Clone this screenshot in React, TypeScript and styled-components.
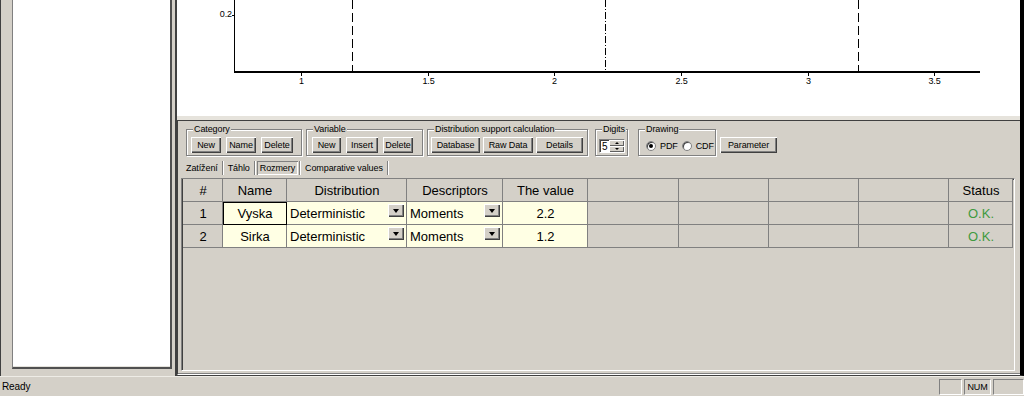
import React from "react";
import styled, { createGlobalStyle } from "styled-components";

const uiFont = `"Liberation Sans", Arial, sans-serif`;
const gridFont = `"Liberation Sans", Arial, sans-serif`;

const GlobalStyle = createGlobalStyle`
  html, body {
    margin: 0;
    padding: 0;
    background: #d4d0c8;
  }
  body {
    width: 1024px;
    height: 396px;
    overflow: hidden;
  }
`;

const Window = styled.div`
  width: 1024px;
  height: 396px;
  display: flex;
  flex-direction: column;
  background: #d4d0c8;
  font-family: ${uiFont};
  font-size: 9px;
  letter-spacing: -0.1px;
  color: #000;
`;

const Main = styled.div`
  display: flex;
  height: 376px;
`;

const LeftPane = styled.div`
  width: 175px;
  box-sizing: border-box;
  border-left: 1px solid #404040;
  padding: 0 3px 7px 11px;
  display: flex;
`;

const ListBox = styled.div`
  flex: 1;
  background: #fff;
  border-left: 1px solid #808080;
  border-right: 2px solid #505050;
  border-bottom: 2px solid #505050;
  box-shadow: inset 0 -1px #e4e2dc;
`;

const RightPane = styled.div`
  flex: 1;
  display: flex;
  flex-direction: column;
  border-left: 2px solid #404040;
  border-right: 4px solid #000;
  border-bottom: 1px solid #404040;
`;

const Chart = styled.div`
  height: 116px;
  background: #fff;
  flex: none;
`;

const Splitter = styled.div`
  height: 4px;
  background: #e6e3dc;
  flex: none;
`;

const ControlPanel = styled.div`
  flex: 1;
  display: flex;
  flex-direction: column;
  border-top: 1px solid #404040;
  border-left: 1px solid #404040;
  border-bottom: 1px solid #fff;
  box-shadow: inset 0 -1px #808080;
  padding-bottom: 3px;
  min-height: 0;
`;

const Toolbar = styled.div`
  display: flex;
  align-items: flex-start;
  padding: 8px 0 0 8px;
`;

const Group = styled.div<{ $w: number; $ml?: number; $pad?: number; $gap?: number; $top?: number }>`
  position: relative;
  box-sizing: border-box;
  width: ${(p) => p.$w}px;
  height: 27px;
  margin-left: ${(p) => p.$ml ?? 0}px;
  padding: ${(p) => p.$top ?? 7}px 0 0 ${(p) => p.$pad ?? 4}px;
  display: flex;
  align-items: flex-start;
  gap: ${(p) => p.$gap ?? 5}px;
  border: 1px solid #808080;
  box-shadow: inset 1px 1px #fff, 1px 1px #fff;
`;

const Legend = styled.span`
  position: absolute;
  top: -7px;
  left: 6px;
  padding: 0 1px;
  line-height: 12px;
  background: #d4d0c8;
`;

const Button = styled.button<{ $w: number; $mt?: number; $ml?: number }>`
  width: ${(p) => p.$w}px;
  height: 16px;
  margin: ${(p) => p.$mt ?? 0}px 0 0 ${(p) => p.$ml ?? 0}px;
  padding: 0;
  border: none;
  background: #d4d0c8;
  font: inherit;
  letter-spacing: inherit;
  color: #000;
  display: flex;
  align-items: center;
  justify-content: center;
  box-shadow: inset 1px 1px #fff, inset -1px -1px #404040, inset -2px -2px #808080;
`;

const Edit = styled.div`
  box-sizing: border-box;
  width: 26px;
  height: 14px;
  margin-top: 2px;
  display: flex;
  align-items: center;
  background: #fff;
  border: 1px solid;
  border-color: #808080 #fff #fff #808080;
  box-shadow: inset 1px 1px #404040;
  padding-left: 2px;
  font-size: 10px;
`;

const Spin = styled.div`
  margin-left: auto;
  width: 15px;
  height: 12px;
  display: flex;
  flex-direction: column;
`;

const SpinButton = styled.div<{ $up?: boolean }>`
  flex: 1;
  background: #d4d0c8;
  display: flex;
  align-items: center;
  justify-content: center;
  box-shadow: inset 1px 1px #fff, inset -1px -1px #606060;
  &::after {
    content: "";
    border-left: 2px solid transparent;
    border-right: 2px solid transparent;
    ${(p) => (p.$up ? "border-bottom: 2px solid #000;" : "border-top: 2px solid #000;")}
  }
`;

const RadioRow = styled.label`
  display: flex;
  align-items: center;
  gap: 4px;
  height: 14px;
  margin-top: 2px;
`;

const RadioDot = styled.span<{ $on?: boolean }>`
  box-sizing: border-box;
  width: 10px;
  height: 10px;
  border-radius: 50%;
  background: #fff;
  border: 1px solid #808080;
  box-shadow: inset 1px 1px #404040;
  display: flex;
  align-items: center;
  justify-content: center;
  &::after {
    content: "";
    width: 4px;
    height: 4px;
    border-radius: 50%;
    background: ${(p) => (p.$on ? "#000" : "transparent")};
  }
`;

const TabBar = styled.div`
  display: flex;
  align-items: stretch;
  height: 14px;
  margin: 5px 0 0 5px;
`;

const Tab = styled.span<{ $active?: boolean }>`
  display: flex;
  align-items: center;
  padding: 0 3px;
  box-shadow: ${(p) => (p.$active ? "inset 1px 1px #808080, inset -1px -1px #fff" : "none")};
`;

const TabSep = styled.span`
  width: 0;
  border-left: 1px solid #808080;
  border-right: 1px solid #fff;
  margin: 0 1px;
`;

const GridFrame = styled.div`
  flex: 1;
  margin: 3px 0 0 3px;
  width: 834px;
  box-sizing: border-box;
  border: 1px solid;
  border-color: #808080 #fff #fff #808080;
  box-shadow: inset 1px 1px #404040;
  padding: 0 0 0 1px;
  font-family: ${gridFont};
  font-size: 13px;
  letter-spacing: 0;
  overflow: hidden;
`;

const Table = styled.div<{ $cols: string }>`
  display: grid;
  grid-template-columns: ${(p) => p.$cols};
  grid-auto-rows: 23px;
`;

const Cell = styled.div<{ $bg?: string; $align?: string; $color?: string; $selected?: boolean }>`
  box-sizing: border-box;
  display: flex;
  align-items: center;
  justify-content: ${(p) => p.$align ?? "center"};
  padding: 0 2px 0 3px;
  white-space: nowrap;
  overflow: hidden;
  background: ${(p) => p.$bg ?? "#d4d0c8"};
  color: ${(p) => p.$color ?? "#000"};
  border-right: 1px solid ${(p) => (p.$selected ? "#000" : "#808080")};
  border-bottom: 1px solid ${(p) => (p.$selected ? "#000" : "#808080")};
  box-shadow: ${(p) => (p.$selected ? "inset 1px 1px #000" : "none")};
`;

const DropButton = styled.span`
  margin: 2px 0 0 auto;
  align-self: flex-start;
  width: 16px;
  height: 13px;
  flex: none;
  background: #d4d0c8;
  display: flex;
  align-items: center;
  justify-content: center;
  box-shadow: inset 1px 1px #fff, inset -1px -1px #404040, inset -2px -2px #808080;
  &::after {
    content: "";
    border-left: 3.5px solid transparent;
    border-right: 3.5px solid transparent;
    border-top: 4px solid #000;
  }
`;

const StatusBar = styled.div`
  height: 20px;
  box-sizing: border-box;
  display: flex;
  align-items: center;
  border-top: 1px solid #eeece6;
`;

const StatusText = styled.span`
  flex: 1;
  padding-left: 2px;
  font-size: 10px;
`;

const StatusPane = styled.span<{ $w: number }>`
  box-sizing: border-box;
  width: ${(p) => p.$w}px;
  height: 16px;
  margin-left: 2px;
  border: 1px solid;
  border-color: #808080 #fff #fff #808080;
  display: flex;
  align-items: center;
  justify-content: center;
`;

const columns = [
  { title: "#", w: 40 },
  { title: "Name", w: 64 },
  { title: "Distribution", w: 120 },
  { title: "Descriptors", w: 96 },
  { title: "The value", w: 85 },
  { title: "", w: 91 },
  { title: "", w: 90 },
  { title: "", w: 90 },
  { title: "", w: 90 },
  { title: "Status", w: 64 },
];

const rows = [
  { id: 1, name: "Vyska", dist: "Deterministic", desc: "Moments", value: "2.2", status: "O.K." },
  { id: 2, name: "Sirka", dist: "Deterministic", desc: "Moments", value: "1.2", status: "O.K." },
];

const YELLOW = "#ffffe4";

// value -> x in chart coordinates (chart starts at page x 177)
const xv = (v: number) => Math.round(124 + (v - 1) * 253.3) + 0.5;
const ticks = [1, 1.5, 2, 2.5, 3, 3.5];
const chartFont = "Liberation Sans, Arial, sans-serif";

const PlotArea = () => (
  <svg width="843" height="116" style={{ display: "block" }}>
    <line x1="57.5" y1="0" x2="57.5" y2="72" stroke="#000" />
    <rect x="57" y="71" width="746" height="2" fill="#000" />
    <line x1="55" y1="15.5" x2="57" y2="15.5" stroke="#000" />
    <text x="55" y="17" fontSize="9" fontFamily={chartFont} textAnchor="end">
      0.2
    </text>
    {ticks.map((t) => (
      <g key={t}>
        <line x1={xv(t)} y1="73" x2={xv(t)} y2="76" stroke="#000" />
        <text x={xv(t)} y="84" fontSize="9" fontFamily={chartFont} textAnchor="middle">
          {t}
        </text>
      </g>
    ))}
    <line x1={xv(1.2)} y1="0" x2={xv(1.2)} y2="71" stroke="#000" strokeDasharray="9 4" />
    <line x1={xv(2.2)} y1="0" x2={xv(2.2)} y2="71" stroke="#000" strokeDasharray="7 2 1 2" />
    <line x1={xv(3.2)} y1="0" x2={xv(3.2)} y2="71" stroke="#000" strokeDasharray="9 4" />
  </svg>
);

const App = () => {
  return (
    <Window>
      <GlobalStyle />
      <Main>
        <LeftPane>
          <ListBox />
        </LeftPane>
        <RightPane>
          <Chart>
            <PlotArea />
          </Chart>
          <Splitter />
          <ControlPanel>
            <Toolbar>
              <Group $w={116} $pad={4}>
                <Legend>Category</Legend>
                <Button $w={30}>New</Button>
                <Button $w={30}>Name</Button>
                <Button $w={32}>Delete</Button>
              </Group>
              <Group $w={117} $ml={4} $pad={5}>
                <Legend>Variable</Legend>
                <Button $w={29}>New</Button>
                <Button $w={32}>Insert</Button>
                <Button $w={30}>Delete</Button>
              </Group>
              <Group $w={161} $ml={4} $pad={3} $gap={3}>
                <Legend>Distribution support calculation</Legend>
                <Button $w={49}>Database</Button>
                <Button $w={50}>Raw Data</Button>
                <Button $w={47}>Details</Button>
              </Group>
              <Group $w={33} $ml={7} $pad={3}>
                <Legend>Digits</Legend>
                <Edit>
                  5
                  <Spin>
                    <SpinButton $up />
                    <SpinButton />
                  </Spin>
                </Edit>
              </Group>
              <Group $w={78} $ml={10} $pad={7} $gap={4}>
                <Legend>Drawing</Legend>
                <RadioRow>
                  <RadioDot $on />
                  PDF
                </RadioRow>
                <RadioRow>
                  <RadioDot />
                  CDF
                </RadioRow>
              </Group>
              <Button $w={57} $mt={8} $ml={4}>
                Parameter
              </Button>
            </Toolbar>
            <TabBar>
              <Tab>Zatížení</Tab>
              <TabSep />
              <Tab>Táhlo</Tab>
              <TabSep />
              <Tab $active>Rozmery</Tab>
              <TabSep />
              <Tab>Comparative values</Tab>
              <TabSep />
            </TabBar>
            <GridFrame>
              <Table $cols={columns.map((c) => `${c.w}px`).join(" ")}>
                {columns.map((c, i) => (
                  <Cell key={`h${i}`}>{c.title}</Cell>
                ))}
                {rows.map((r) => (
                  <React.Fragment key={r.id}>
                    <Cell>{r.id}</Cell>
                    <Cell $bg={YELLOW} $selected={r.id === 1}>
                      {r.name}
                    </Cell>
                    <Cell $bg={YELLOW} $align="flex-start">
                      {r.dist}
                      <DropButton />
                    </Cell>
                    <Cell $bg={YELLOW} $align="flex-start">
                      {r.desc}
                      <DropButton />
                    </Cell>
                    <Cell $bg={YELLOW}>{r.value}</Cell>
                    <Cell />
                    <Cell />
                    <Cell />
                    <Cell />
                    <Cell $color="#3f9a3f">{r.status}</Cell>
                  </React.Fragment>
                ))}
              </Table>
            </GridFrame>
          </ControlPanel>
        </RightPane>
      </Main>
      <StatusBar>
        <StatusText>Ready</StatusText>
        <StatusPane $w={23} />
        <StatusPane $w={27}>NUM</StatusPane>
        <StatusPane $w={31} />
      </StatusBar>
    </Window>
  );
};

export default App;
